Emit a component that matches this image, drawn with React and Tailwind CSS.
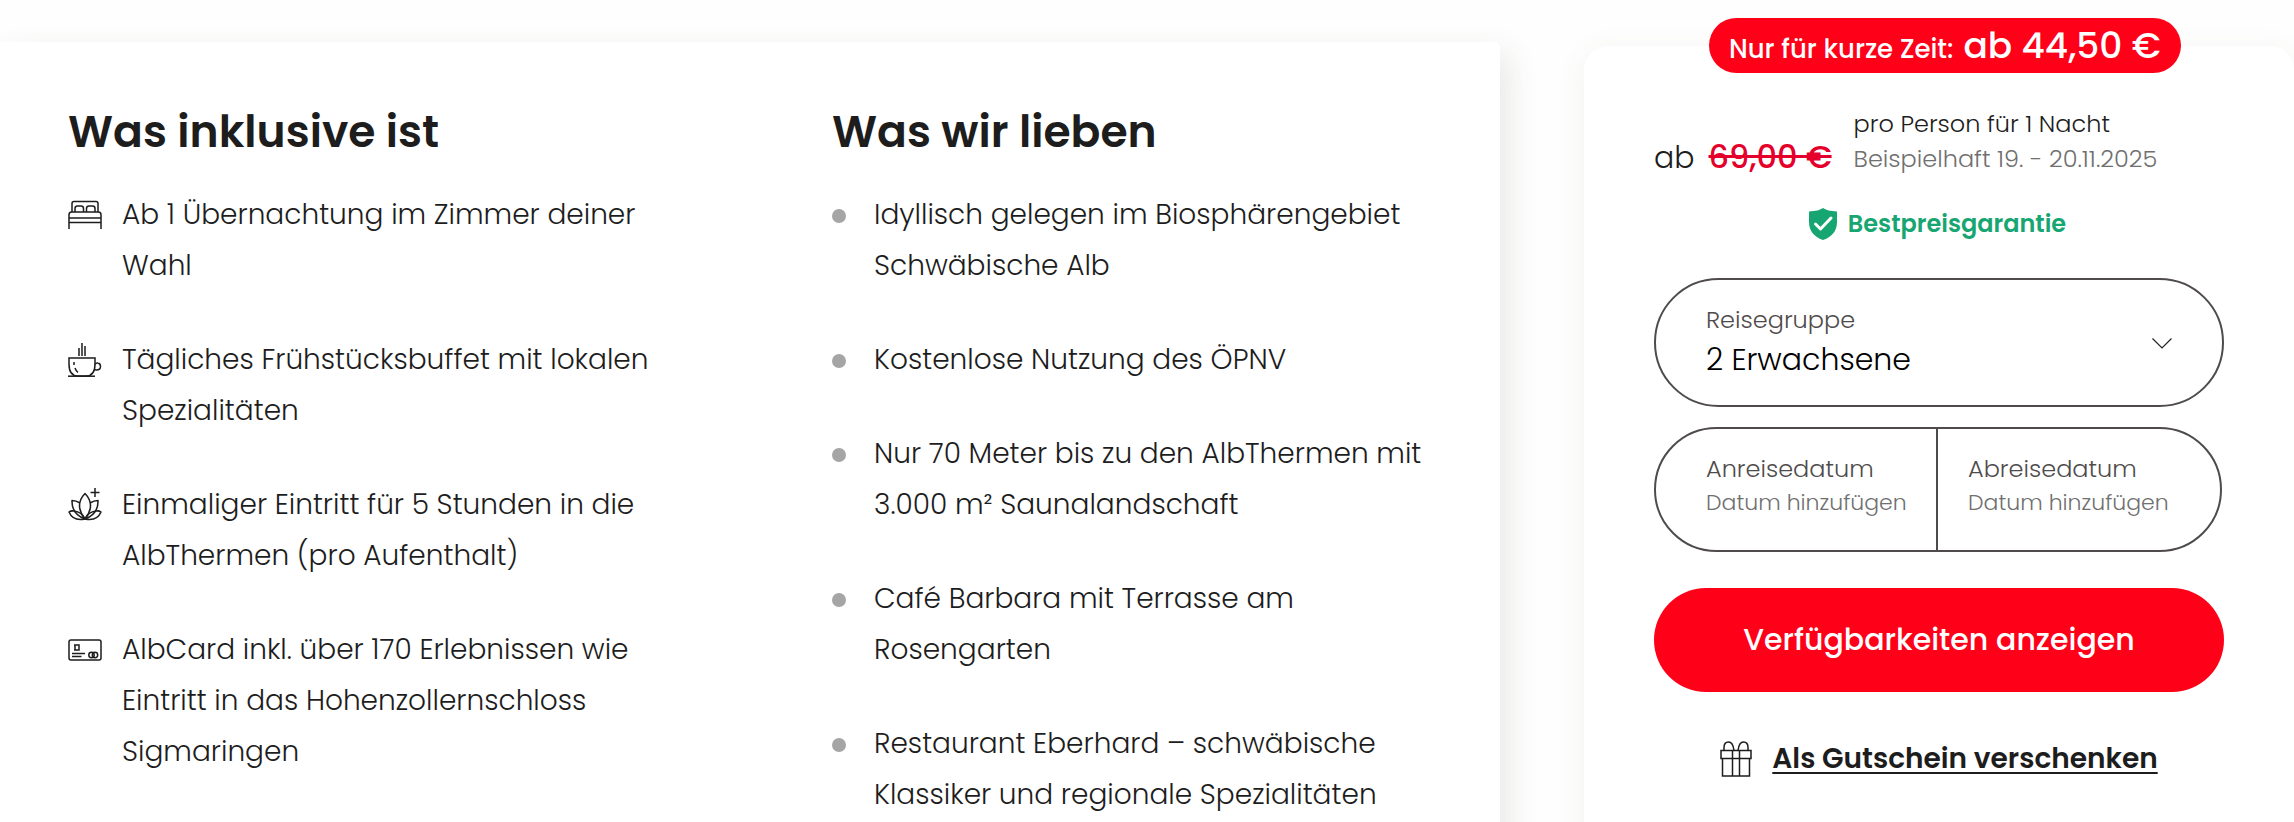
import { useState } from "react";

function BedIcon() {
  return (
    <svg viewBox="0 0 34 34" className="w-[34px] h-[34px]" fill="none" stroke="currentColor" strokeWidth="1.5">
      <path d="M4 14V5.500Q4 3.500 6 3.500H28Q30 3.500 30 5.500V14" />
      <path d="M7 14V10.500Q7 8 9.500 8H13Q15.500 8 15.500 10.500V14M18.500 14V10.500Q18.500 8 21 8H24.500Q27 8 27 10.500V14" />
      <path d="M1 31V17Q1 14 3.500 14H30.500Q33 14 33 17V31M1 20H33M1 24.500H33" />
    </svg>
  );
}

function CupIcon() {
  return (
    <svg viewBox="0 0 34 34" className="w-[34px] h-[34px]" fill="none" stroke="currentColor" strokeWidth="1.5">
      <path d="M11 5V13M14 0V13M17 3V13" />
      <path d="M1 15H27V21Q27 33 18 33H10Q1 33 1 21Z" />
      <path d="M27 21.500Q28 19.500 30 20Q32.500 20.500 32.500 23.500Q32.500 27 28.500 27Q27 27 26 26" />
      <path d="M6 19V22M7 25Q8 28 10 29.500" />
      <path d="M0 33.200H27" />
    </svg>
  );
}

function LotusIcon() {
  return (
    <svg viewBox="0 0 34 34" className="w-[34px] h-[34px]" fill="none" stroke="currentColor" strokeWidth="1.5" strokeLinejoin="round">
      <path d="M27 0V9M22.500 4.500H31.500" />
      <path d="M17 31Q6 17 17 5.500Q28 17 17 31Z" />
      <path d="M12 15Q8 12.500 4 12.500Q3.500 26 17 31M22 15Q26 12.500 30 12.500Q30.500 26 17 31" />
      <path d="M6 23Q3 22.500 1 24Q5 33.500 17 31Q14 24 6 23M28 23Q31 22.500 33 24Q29 33.500 17 31Q20 24 28 23" />
    </svg>
  );
}

function CardIcon() {
  return (
    <svg viewBox="0 0 34 34" className="w-[34px] h-[34px]" fill="none" stroke="currentColor" strokeWidth="1.5">
      <rect x="1" y="7" width="32" height="20" rx="2" />
      <path d="M6 12H11V17H6M7 12V17M4 20.500H17M4 23.500H13.500" />
      <circle cx="23.5" cy="22" r="2.700" />
      <circle cx="27" cy="22" r="2.700" />
    </svg>
  );
}

function GiftIcon() {
  return (
    <svg viewBox="0 0 32 36" className="w-8 h-9" fill="none" stroke="currentColor" strokeWidth="1.5">
      <path d="M1 9.500H31V17.500H1ZM2.500 17.500V35H29.500V17.500M12.500 9.500V35M19.500 9.500V35" />
      <path d="M14 9.500Q13 1 8.500 1Q4 1 4 6.500V9.500M18 9.500Q19 1 23.500 1Q28 1 28 6.500V9.500" />
    </svg>
  );
}

function ShieldIcon() {
  return (
    <svg viewBox="0 0 30 32" className="w-[30px] h-8">
      <path d="M15 0Q19 3 29 3.500V14Q29 27 15 32Q1 27 1 14V3.500Q11 3 15 0Z" fill="#17a672" />
      <path d="M7.500 16L12.500 21L23 10" fill="none" stroke="#fff" strokeWidth="3" strokeLinecap="round" strokeLinejoin="round" />
    </svg>
  );
}

const included = [
  { icon: BedIcon, text: "Ab 1 Übernachtung im Zimmer deiner Wahl" },
  { icon: CupIcon, text: "Tägliches Frühstücksbuffet mit lokalen Spezialitäten" },
  { icon: LotusIcon, text: "Einmaliger Eintritt für 5 Stunden in die AlbThermen (pro Aufenthalt)" },
  { icon: CardIcon, text: "AlbCard inkl. über 170 Erlebnissen wie Eintritt in das Hohenzollernschloss Sigmaringen" },
];

const highlights = [
  "Idyllisch gelegen im Biosphärengebiet Schwäbische Alb",
  "Kostenlose Nutzung des ÖPNV",
  "Nur 70 Meter bis zu den AlbThermen mit 3.000 m² Saunalandschaft",
  "Café Barbara mit Terrasse am Rosengarten",
  "Restaurant Eberhard – schwäbische Klassiker und regionale Spezialitäten",
];

function OfferDetails() {
  return (
    <main className="mt-[42px] grid grid-cols-2 gap-[164px] rounded-tr-md bg-white px-[68px] pt-[62px] pb-8 shadow-[8px_12px_32px_rgba(75,65,50,0.12)]">
      <section>
        <h2 className="text-[44px] leading-[56px] font-semibold">Was inklusive ist</h2>
        <ul className="mt-[29px] flex flex-col gap-[43px]">
          {included.map(({ icon: Icon, text }) => (
            <li key={text} className="flex gap-5">
              <span className="flex h-[51px] shrink-0 items-center">
                <Icon />
              </span>
              <span className="text-[28px] leading-[51px] font-light">{text}</span>
            </li>
          ))}
        </ul>
      </section>

      <section>
        <h2 className="text-[44px] leading-[56px] font-semibold">Was wir lieben</h2>
        <ul className="mt-[29px] flex flex-col gap-[43px]">
          {highlights.map((text) => (
            <li key={text} className="flex gap-7">
              <span className="mt-5 h-3.5 w-3.5 shrink-0 rounded-full bg-[#a5a5a5]" />
              <span className="text-[28px] leading-[51px] font-light">{text}</span>
            </li>
          ))}
        </ul>
      </section>
    </main>
  );
}

function DateField({ id, label, className }) {
  return (
    <div className={className}>
      <label htmlFor={id} className="block text-[24px] leading-9 font-light text-[#4f4b4b]">
        {label}
      </label>
      <input
        id={id}
        type="text"
        placeholder="Datum hinzufügen"
        className="block w-full bg-transparent text-[22px] leading-8 font-light outline-none placeholder:text-[#707070]"
      />
    </div>
  );
}

function BookingCard() {
  const [group, setGroup] = useState("2");

  return (
    <aside className="relative mt-[46px] rounded-t-3xl bg-white px-[70px] pt-[60px] pb-8 shadow-[0_6px_32px_rgba(100,80,50,0.07)]">
      {/* Angebots-Badge auf der Oberkante der Karte */}
      <div className="absolute -top-7 left-[125px] flex h-[55px] items-baseline gap-2.5 rounded-full bg-[#ff0019] px-5 whitespace-nowrap text-white">
        <span className="text-[26px] leading-[56px] font-medium">Nur für kurze Zeit:</span>
        <span className="text-[36px] leading-[56px] font-medium">ab 44,50 €</span>
      </div>

      <div className="flex items-end">
        <p className="flex items-baseline gap-3.5 leading-9">
          <span className="text-[30px] font-light">ab</span>
          <s className="text-[32px] font-medium text-[#e4002b] decoration-[3px]">69,00 €</s>
        </p>
        <p className="ml-[22px] text-[24px] leading-[35px] font-light whitespace-nowrap">
          pro Person für 1 Nacht
          <span className="block text-[#707070]">Beispielhaft 19. - 20.11.2025</span>
        </p>
      </div>

      <p className="mt-[30px] flex items-center justify-center gap-2.5 pr-1 text-[24px] leading-9 font-semibold text-[#17a672]">
        <ShieldIcon />
        Bestpreisgarantie
      </p>

      <form onSubmit={(e) => e.preventDefault()}>
        <div className="relative mt-9 h-[129px] rounded-full border-2 border-[#4f4b4b] px-[50px] pt-[22px]">
          <label htmlFor="group" className="block text-[24px] leading-9 font-light text-[#4f4b4b]">
            Reisegruppe
          </label>
          <select
            id="group"
            value={group}
            onChange={(e) => setGroup(e.target.value)}
            className="block w-full appearance-none bg-transparent text-[30px] leading-[44px] font-light text-black outline-none"
          >
            <option value="2">2 Erwachsene</option>
          </select>
          <svg viewBox="0 0 20 12" className="pointer-events-none absolute top-[58px] right-[50px] h-3 w-5" fill="none" stroke="#222" strokeWidth="1.2">
            <path d="M0.500 0.500L10 10L19.500 0.500" />
          </svg>
        </div>

        <div className="mt-5 mr-0.5 grid h-[125px] grid-cols-2 rounded-full border-2 border-[#4f4b4b]">
          <DateField id="arrival" label="Anreisedatum" className="border-r-2 border-[#4f4b4b] pt-[22px] pl-[50px]" />
          <DateField id="departure" label="Abreisedatum" className="pt-[22px] pr-8 pl-[30px]" />
        </div>

        <button type="submit" className="mt-9 h-[104px] w-full rounded-full bg-[#ff0019] pb-0.5 text-[30px] font-medium text-white">
          Verfügbarkeiten anzeigen
        </button>
      </form>

      <a href="#gutschein" className="mt-[49px] flex items-center justify-center gap-5 text-[28px] leading-9 font-semibold">
        <GiftIcon />
        <span className="underline decoration-2 underline-offset-4">Als Gutschein verschenken</span>
      </a>
    </aside>
  );
}

export default function App() {
  return (
    <div className="grid min-h-screen grid-cols-[minmax(0,1fr)_710px] gap-[84px] overflow-hidden bg-[#fefefe] font-[Poppins,Inter,sans-serif] text-[#1d1d1d]">
      <OfferDetails />
      <BookingCard />
    </div>
  );
}
